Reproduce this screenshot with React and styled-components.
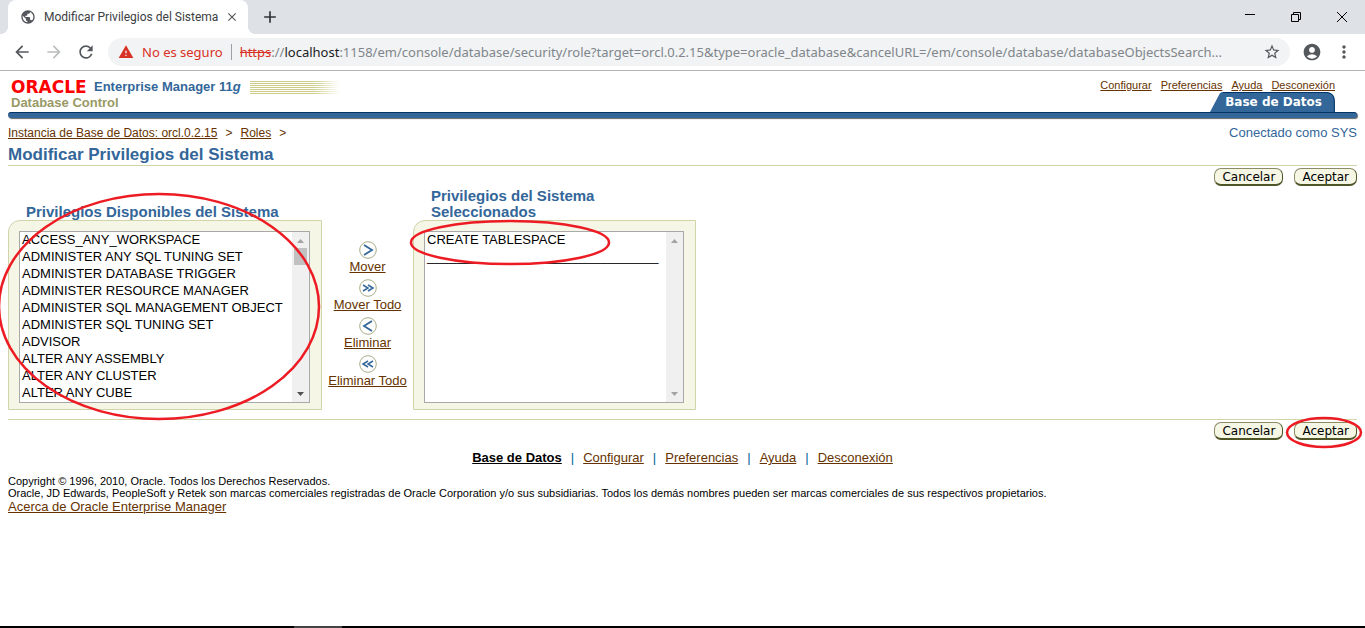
import React from 'react';
import styled, { createGlobalStyle } from 'styled-components';
import {
  MdPublic, MdClose, MdAdd, MdArrowBack, MdArrowForward, MdRefresh,
  MdWarning, MdStarBorder, MdAccountCircle, MdMoreVert,
} from 'react-icons/md';

const blue = '#336699';
const olive = '#cfd4a9';
const brown = '#663300';
const red = '#ed1c24';

const GlobalStyle = createGlobalStyle`
  * { box-sizing: border-box; }
  body { margin: 0; background: #fff; color: #000; font: 13px/16px "Liberation Sans", Arial, sans-serif; }
  button { font: inherit; color: inherit; padding: 0; border: 0; background: none; cursor: pointer; }
  h1, h2, p { margin: 0; }
`;

const Screen = styled.div`
  min-height: 100vh;
  display: flex;
  flex-direction: column;
  overflow: hidden;
`;

/* Browser window */
const TabStrip = styled.div`
  height: 34px;
  padding-left: 8px;
  display: flex;
  align-items: center;
  background: #dee1e6;
  color: #3c4043;
`;
const BrowserTab = styled.div`
  position: relative;
  width: 240px;
  height: 34px;
  padding: 0 8px 0 12px;
  display: flex;
  align-items: center;
  gap: 8px;
  background: #fff;
  border-radius: 8px 8px 0 0;
  font: 12px/16px Roboto, "Segoe UI", sans-serif;
  &::before, &::after {
    content: '';
    position: absolute;
    bottom: 0;
    width: 8px;
    height: 8px;
  }
  &::before { left: -8px; background: radial-gradient(circle at 0 0, #dee1e6 8px, #fff 8px); }
  &::after { right: -8px; background: radial-gradient(circle at 100% 0, #dee1e6 8px, #fff 8px); }
`;
const TabTitle = styled.span`
  flex: 1;
  min-width: 0;
  white-space: nowrap;
`;
const IconButton = styled.button`
  display: flex;
  align-items: center;
  justify-content: center;
  flex: none;
  width: ${p => p.$w || 20}px;
  height: 28px;
  color: ${p => p.$color || '#54585d'};
`;
const NewTab = styled(IconButton)`
  margin-left: 12px;
`;
const WindowControls = styled.div`
  margin-left: auto;
  display: flex;
`;
const Toolbar = styled.div`
  height: 37px;
  padding: 0 11px 0 12px;
  display: flex;
  align-items: center;
  gap: 12px;
  background: #fff;
  border-bottom: 1px solid #b4b4b4;
`;
const AddressBar = styled.div`
  flex: 1;
  min-width: 0;
  height: 28px;
  padding: 0 8px 0 10px;
  display: flex;
  align-items: center;
  gap: 8px;
  border-radius: 14px;
  background: #f1f3f4;
  color: #80868b;
  font: 13px/20px "Noto Sans", "Segoe UI", sans-serif;
`;
const Warning = styled.span`
  flex: none;
  display: flex;
  align-items: center;
  gap: 8px;
  padding-right: 8px;
  color: #d93025;
  border-right: 1px solid #9aa0a6;
  line-height: 16px;
`;
const Url = styled.span`
  flex: 1;
  min-width: 0;
  white-space: nowrap;
  overflow: hidden;
  text-overflow: ellipsis;
  b { font-weight: 400; color: #202124; }
  s { color: #d93025; }
`;

/* Console page */
const Page = styled.div`
  flex: 1;
  padding: 0 8px;
`;
const Header = styled.header`
  display: flex;
  justify-content: space-between;
  height: 41px;
`;
const Brand = styled.div`
  padding: 8px 0 0 3px;
  font-weight: 700;
  color: #999966;
`;
const BrandLine = styled.div`
  display: flex;
  align-items: center;
  color: ${blue};
`;
const Oracle = styled.span`
  width: 83px;
  color: #f00;
  font: 700 17px/16px "DejaVu Sans", sans-serif;
`;
const Stripes = styled.svg`
  width: 90px;
  height: 13px;
  margin-left: 9px;
`;
const HeaderSide = styled.div`
  display: flex;
  flex-direction: column;
  align-items: flex-end;
  justify-content: flex-end;
  padding-right: 22px;
`;
const Link = styled.a`
  color: ${p => (p.$strong ? '#000' : brown)};
  font-weight: ${p => (p.$strong ? 700 : 400)};
  text-decoration: underline;
`;
const TopLinks = styled.nav`
  display: flex;
  gap: 9px;
  font-size: 11px;
  line-height: 14px;
`;
const SectionTab = styled.div`
  position: relative;
  height: 20px;
  padding: 0 13px 0 15px;
  font: 700 12px/20px "DejaVu Sans", Verdana, sans-serif;
  color: #fff;
  svg { position: absolute; inset: 0; width: 100%; height: 100%; }
  span { position: relative; }
`;
const Bar = styled.div`
  height: 6px;
  border-radius: 3px;
  background: ${blue};
  border-top: 1px solid #003366;
  box-shadow: 1px 1px 1px #666;
`;
const CrumbRow = styled.div`
  display: flex;
  justify-content: space-between;
  padding-top: 7px;
  color: ${blue};
`;
const Crumbs = styled.nav`
  display: flex;
  gap: 8px;
  font-size: 12px;
  color: ${brown};
`;
const Title = styled.h1`
  margin-top: 4px;
  font-size: 17px;
  line-height: 20px;
  color: ${blue};
  border-bottom: 1px solid ${olive};
`;
const Actions = styled.div`
  display: flex;
  justify-content: flex-end;
  gap: 11px;
  padding-top: 2px;
`;
const Pill = styled.button`
  height: 18px;
  padding: 0 7px;
  border: 1px solid #8b8b66;
  border-bottom: 2px solid #4f5527;
  border-right-color: #4f5527;
  border-radius: 7px;
  background: #f5f6e4;
  font: 12px/14px "DejaVu Sans", Verdana, sans-serif;
`;
const Marked = styled.div`
  position: relative;
`;
const Ring = styled.svg`
  position: absolute;
  left: ${p => p.$x}px;
  top: ${p => p.$y}px;
  overflow: visible;
  pointer-events: none;
`;

const Shuttle = styled.div`
  display: flex;
  align-items: flex-end;
  padding-bottom: 9px;
  border-bottom: 1px solid ${olive};
`;
const ListColumn = styled.div`
  position: relative;
  width: ${p => p.$w}px;
`;
const ListLabel = styled.label`
  display: block;
  padding: 2px 70px 0 18px;
  font-size: 15px;
  line-height: 16px;
  font-weight: 700;
  color: ${blue};
  white-space: ${p => (p.$oneLine ? 'nowrap' : 'normal')};
`;
const ListPanel = styled.div`
  padding: 10px 11px 6px 10px;
  background: #f5f6e5;
  border: 1px solid ${olive};
  border-top-left-radius: 12px;
`;
const ListFrame = styled.div`
  display: flex;
  height: 172px;
  border: 1px solid #a9a9a9;
  background: #fff;
`;
const List = styled.select`
  flex: 1;
  min-width: 0;
  padding: 0;
  border: 0;
  outline: 0;
  border-radius: 0;
  background: #fff;
  color: #000;
  font: 13px/17px "Liberation Sans", Arial, sans-serif;
  overflow-x: hidden;
  scrollbar-width: none;
  option { height: 17px; min-height: 17px; padding: 0 2px; line-height: 17px; }
`;
const ScrollTrack = styled.div`
  width: 17px;
  display: flex;
  flex-direction: column;
  align-items: center;
  justify-content: space-between;
  padding: 7px 0 6px;
  background: #f0f0f0;
`;
const Thumb = styled.div`
  width: 13px;
  height: 17px;
  margin: 5px 0 auto;
  background: #c1c1c1;
`;
const Movers = styled.div`
  width: 91px;
  padding-bottom: 19px;
  display: flex;
  flex-direction: column;
  align-items: center;
  gap: 2px;
`;
const Mover = styled.button`
  display: flex;
  flex-direction: column;
  align-items: center;
  height: 36px;
  color: ${brown};
  text-decoration: underline;
  white-space: nowrap;
  line-height: 16px;
`;
const FooterNav = styled.nav`
  display: flex;
  justify-content: center;
  gap: 9px;
  padding: 9px 0 8px;
  line-height: 18px;
  color: #006699;
`;
const Legal = styled.p`
  font-size: 11px;
  line-height: 12px;
`;
const Taskbar = styled.div`
  height: 2px;
  background: linear-gradient(90deg, #000 294px, #444 294px 342px, #000 342px);
`;

const available = [
  'ACCESS_ANY_WORKSPACE', 'ADMINISTER ANY SQL TUNING SET', 'ADMINISTER DATABASE TRIGGER',
  'ADMINISTER RESOURCE MANAGER', 'ADMINISTER SQL MANAGEMENT OBJECT', 'ADMINISTER SQL TUNING SET',
  'ADVISOR', 'ALTER ANY ASSEMBLY', 'ALTER ANY CLUSTER', 'ALTER ANY CUBE',
];
const selected = ['CREATE TABLESPACE', '________________________________'];

const chevrons = {
  Mover: ['5,4 13,9 5,14'],
  'Mover Todo': ['4,6 9,9 4,12', '9,6 14,9 9,12'],
  Eliminar: ['13,4 5,9 13,14'],
  'Eliminar Todo': ['9,6 4,9 9,12', '14,6 9,9 14,12'],
};

function Ellipse({ x, y, w, h }) {
  return (
    <Ring $x={x} $y={y} width={w} height={h} aria-hidden="true">
      <ellipse cx={w / 2} cy={h / 2} rx={w / 2 - 1} ry={h / 2 - 1} fill="none" stroke={red} strokeWidth="2.5" />
    </Ring>
  );
}

function Arrow({ down, color }) {
  return (
    <svg width="7" height="4" viewBox="0 0 7 4" aria-hidden="true">
      <path d={down ? 'M0 0H7L3.5 4Z' : 'M0 4H7L3.5 0Z'} fill={color} />
    </svg>
  );
}

function Listbox({ id, items, scrollable }) {
  return (
    <ListPanel>
      <ListFrame>
        <List id={id} multiple size={10}>
          {items.map(item => <option key={item}>{item}</option>)}
        </List>
        <ScrollTrack>
          <Arrow color="#a3a3a3" />
          {scrollable && <Thumb />}
          <Arrow down color={scrollable ? '#505050' : '#a3a3a3'} />
        </ScrollTrack>
      </ListFrame>
    </ListPanel>
  );
}

export default function App() {
  return (
    <Screen>
      <GlobalStyle />
      <TabStrip>
        <BrowserTab>
          <MdPublic size={16} color="#54585d" />
          <TabTitle>Modificar Privilegios del Sistema</TabTitle>
          <IconButton $w={16} aria-label="Cerrar pestaña"><MdClose size={14} /></IconButton>
        </BrowserTab>
        <NewTab aria-label="Nueva pestaña" $color="#303438"><MdAdd size={20} /></NewTab>
        <WindowControls>
          <IconButton $w={46} aria-label="Minimizar">
            <svg width="10" height="10"><path d="M0 2.5H10" stroke="#000" /></svg>
          </IconButton>
          <IconButton $w={46} aria-label="Restaurar">
            <svg width="10" height="10"><path d="M.5 2.5H7.5V9.5H.5ZM2.5 2.5V.5H9.5V7.5H7.5" fill="none" stroke="#000" /></svg>
          </IconButton>
          <IconButton $w={46} aria-label="Cerrar">
            <svg width="10" height="10"><path d="M0 0L10 10M10 0L0 10" stroke="#000" /></svg>
          </IconButton>
        </WindowControls>
      </TabStrip>
      <Toolbar>
        <IconButton aria-label="Atrás"><MdArrowBack size={20} /></IconButton>
        <IconButton aria-label="Adelante" $color="#bbbdbf"><MdArrowForward size={20} /></IconButton>
        <IconButton aria-label="Recargar"><MdRefresh size={20} /></IconButton>
        <AddressBar>
          <Warning><MdWarning size={16} />No es seguro</Warning>
          <Url><s>https</s>://<b>localhost</b>:1158/em/console/database/security/role?target=orcl.0.2.15&amp;type=oracle_database&amp;cancelURL=/em/console/database/databaseObjectsSearch...</Url>
          <IconButton aria-label="Marcador"><MdStarBorder size={18} /></IconButton>
        </AddressBar>
        <IconButton aria-label="Perfil"><MdAccountCircle size={20} /></IconButton>
        <IconButton aria-label="Menú"><MdMoreVert size={20} /></IconButton>
      </Toolbar>

      <Page>
        <Header>
          <Brand>
            <BrandLine>
              <Oracle>ORACLE</Oracle>
              <span>Enterprise Manager 11<i>g</i></span>
              <Stripes viewBox="0 0 90 13" aria-hidden="true">
                <defs>
                  <linearGradient id="fade">
                    <stop offset="0.7" stopColor="#cccc88" />
                    <stop offset="1" stopColor="#cccc88" stopOpacity="0" />
                  </linearGradient>
                </defs>
                {[0, 2, 4, 6, 8, 10, 12].map(y => (
                  <rect key={y} y={y} width="90" height="1" fill="url(#fade)" />
                ))}
              </Stripes>
            </BrandLine>
            Database Control
          </Brand>
          <HeaderSide>
            <TopLinks>
              <Link href="#configurar">Configurar</Link>
              <Link href="#preferencias">Preferencias</Link>
              <Link href="#ayuda">Ayuda</Link>
              <Link href="#desconexion">Desconexión</Link>
            </TopLinks>
            <SectionTab>
              <svg viewBox="0 0 125 20" preserveAspectRatio="none" aria-hidden="true">
                <path d="M0 20L9 3Q10 0 13 0H117Q125 1 125 9V20Z" fill={blue} />
                <path d="M13 .5H117Q124.500 1 124.500 9V20" fill="none" stroke="#003366" />
              </svg>
              <span>Base de Datos</span>
            </SectionTab>
          </HeaderSide>
        </Header>
        <Bar />
        <CrumbRow>
          <Crumbs>
            <Link href="#instancia">Instancia de Base de Datos: orcl.0.2.15</Link>
            <span>&gt;</span>
            <Link href="#roles">Roles</Link>
            <span>&gt;</span>
          </Crumbs>
          <span>Conectado como SYS</span>
        </CrumbRow>
        <Title>Modificar Privilegios del Sistema</Title>
        <Actions>
          <Pill>Cancelar</Pill>
          <Pill>Aceptar</Pill>
        </Actions>

        <Shuttle>
          <ListColumn $w={314}>
            <ListLabel htmlFor="available" $oneLine>Privilegios Disponibles del Sistema</ListLabel>
            <Listbox id="available" items={available} scrollable />
            <Ellipse x={-10} y={-9} w={322} h={227} />
          </ListColumn>
          <Movers>
            {Object.entries(chevrons).map(([name, lines]) => (
              <Mover key={name}>
                <svg width="18" height="18" viewBox="0 0 18 18" aria-hidden="true">
                  <circle cx="9" cy="9" r="8.300" fill="#fff" stroke="#a9ab86" />
                  {lines.map(points => (
                    <polyline key={points} points={points} fill="none" stroke={blue} strokeWidth={lines.length > 1 ? 1.5 : 1.8} />
                  ))}
                </svg>
                {name}
              </Mover>
            ))}
          </Movers>
          <ListColumn $w={283}>
            <ListLabel htmlFor="selected">Privilegios del Sistema Seleccionados</ListLabel>
            <Listbox id="selected" items={selected} />
            <Ellipse x={-3} y={34} w={200} h={45} />
          </ListColumn>
        </Shuttle>

        <Actions>
          <Pill>Cancelar</Pill>
          <Marked>
            <Pill>Aceptar</Pill>
            <Ellipse x={-8} y={-5} w={76} h={31} />
          </Marked>
        </Actions>
        <FooterNav>
          <Link $strong href="#base">Base de Datos</Link>
          <span>|</span>
          <Link href="#configurar">Configurar</Link>
          <span>|</span>
          <Link href="#preferencias">Preferencias</Link>
          <span>|</span>
          <Link href="#ayuda">Ayuda</Link>
          <span>|</span>
          <Link href="#desconexion">Desconexión</Link>
        </FooterNav>
        <Legal>Copyright © 1996, 2010, Oracle. Todos los Derechos Reservados.</Legal>
        <Legal>Oracle, JD Edwards, PeopleSoft y Retek son marcas comerciales registradas de Oracle Corporation y/o sus subsidiarias. Todos los demás nombres pueden ser marcas comerciales de sus respectivos propietarios.</Legal>
        <Link href="#acerca">Acerca de Oracle Enterprise Manager</Link>
      </Page>
      <Taskbar />
    </Screen>
  );
}
